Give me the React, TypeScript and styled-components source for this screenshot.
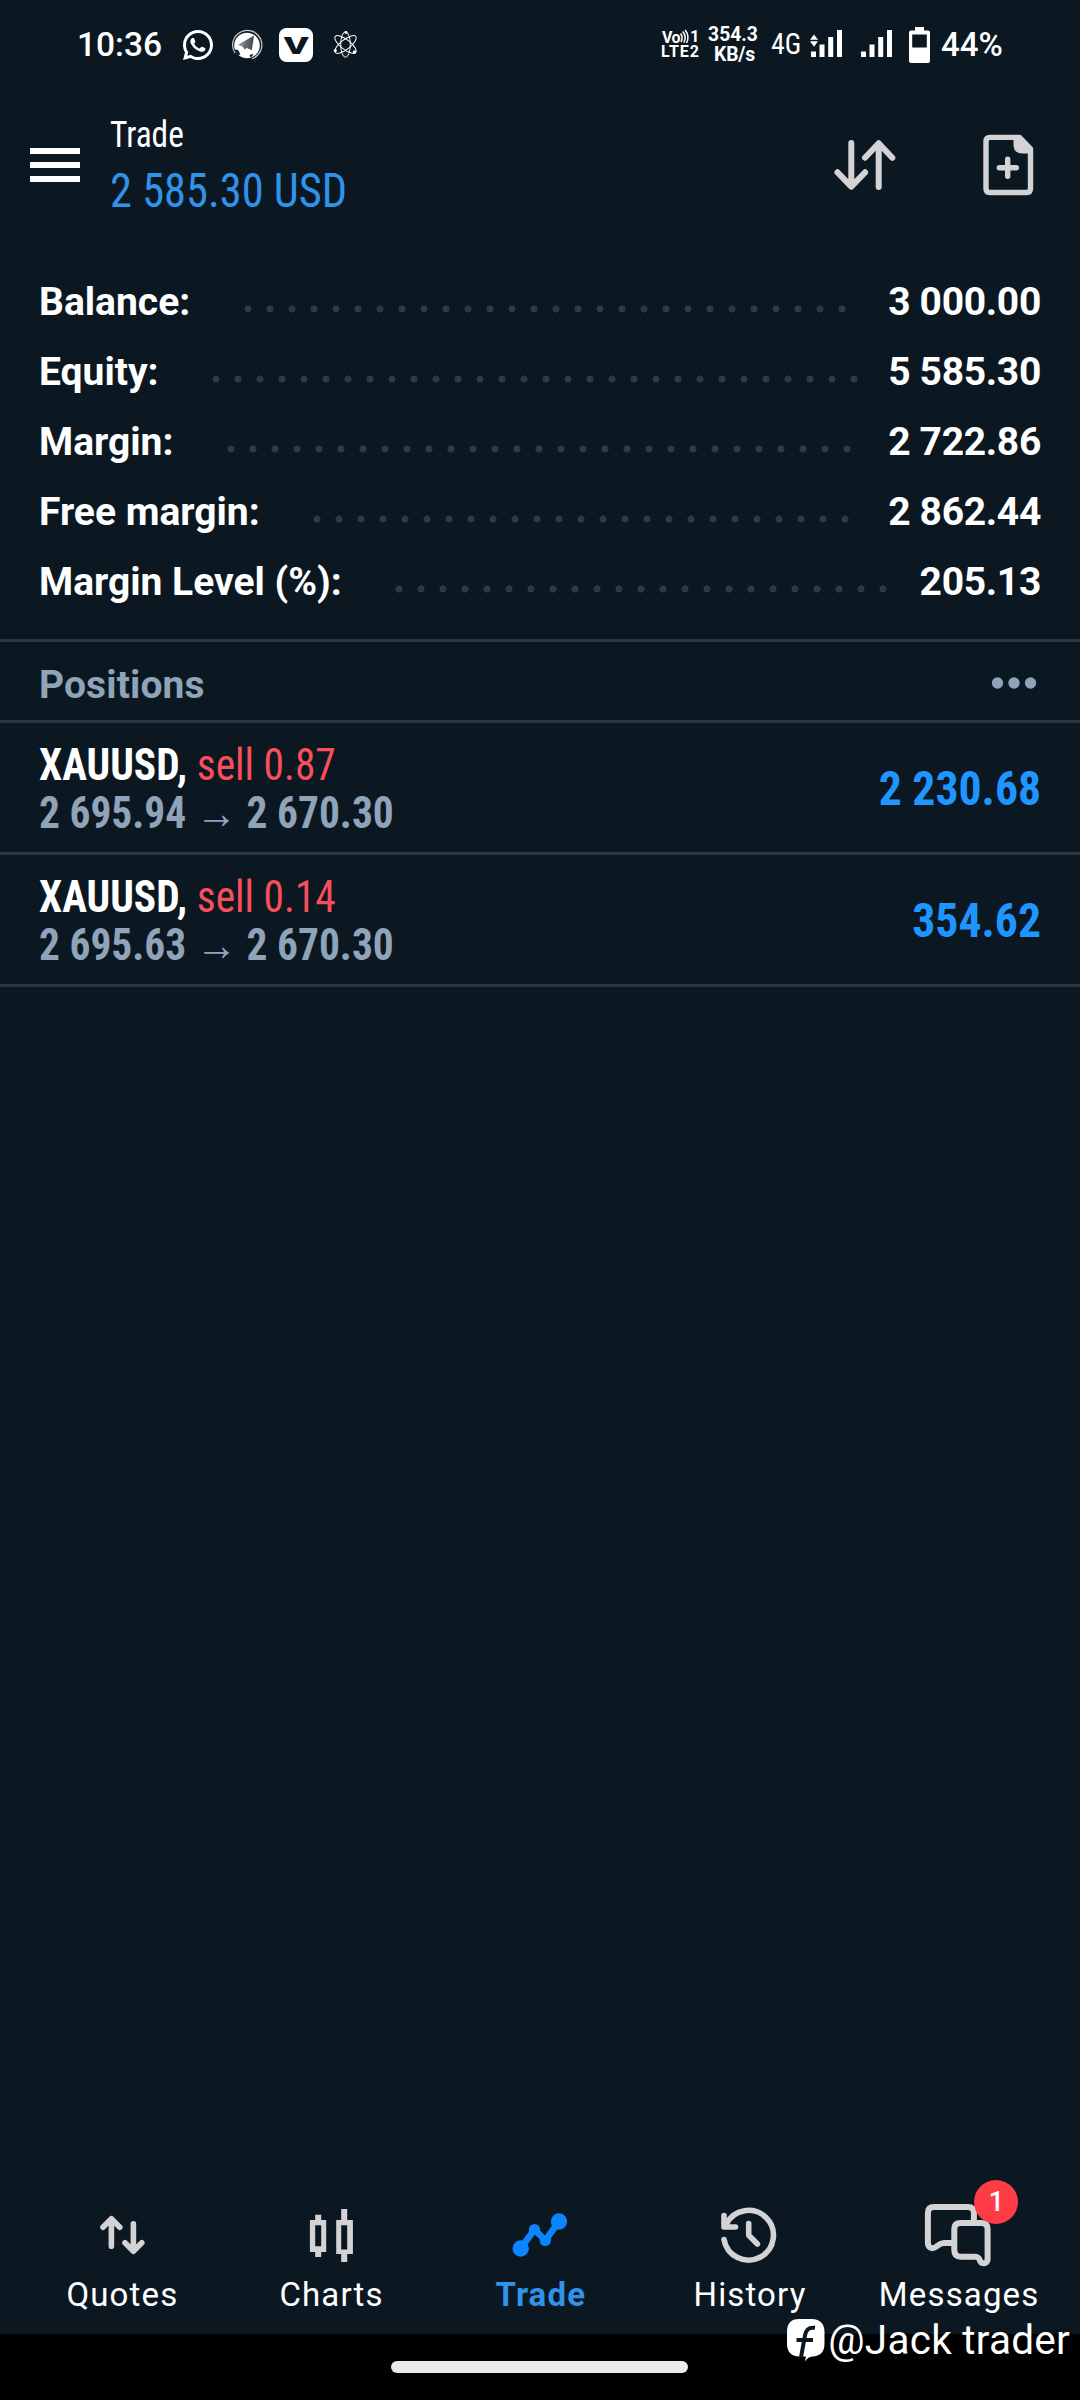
import React from "react";
import styled, { createGlobalStyle } from "styled-components";
import { RiWhatsappLine } from "react-icons/ri";

const color = {
  bg: "#0c1821",
  line: "#293744",
  dot: "#2c3946",
  white: "#ffffff",
  muted: "#8fa3b9",
  icon: "#d3d3d5",
  blue: "#1f95ff",
  blueSoft: "#2f93ea",
  red: "#f74f5b",
  badge: "#ff3b45",
};

const roboto = `Roboto, "Liberation Sans", sans-serif`;
const condensed = `"Roboto Condensed", Roboto, serif`;

const GlobalStyle = createGlobalStyle`
  * { box-sizing: border-box; }
  body { margin: 0; background: #000; }
`;

const Screen = styled.div`
  display: flex;
  flex-direction: column;
  position: relative;
  width: 1080px;
  height: 2400px;
  background: ${color.bg};
  color: ${color.white};
  font-family: ${roboto};
  overflow: hidden;
`;

const Icon = styled.svg`
  display: block;
  flex: none;
  overflow: visible;
`;

/* ---------- status bar ---------- */

const StatusBar = styled.header`
  display: flex;
  justify-content: space-between;
  height: 90px;
  padding: 0 77px;
`;

const StatusGroup = styled.div`
  display: flex;
  align-items: center;
`;

const Slot = styled.div<{ $gap: number }>`
  display: flex;
  flex: none;
  margin-left: ${(p) => p.$gap}px;
`;

const Clock = styled.time`
  width: 103px;
  font-size: 33.5px;
  font-weight: 500;
  line-height: 90px;
`;

const NetSpeed = styled.div`
  display: flex;
  flex-direction: column;
  align-items: center;
  width: 56px;
  margin-left: 5px;
  font-size: 19.3px;
  font-weight: 700;
  line-height: 20px;
`;

const SpeedUnit = styled.span`
  padding-left: 3px;
  letter-spacing: -0.2px;
`;

const NetType = styled.span`
  width: 32px;
  margin: -2px 0 0 10px;
  font-family: ${condensed};
  font-size: 29px;
  line-height: 40px;
  transform: scaleX(0.96);
  transform-origin: left;
`;

const Percent = styled.span`
  width: 62px;
  margin-left: 10px;
  font-size: 33px;
  font-weight: 500;
  line-height: 90px;
  white-space: nowrap;
`;

/* ---------- app header ---------- */

const AppBar = styled.div`
  display: flex;
  align-items: center;
  height: 150px;
  padding: 0 46px 0 30px;
`;

const TitleBlock = styled.div`
  display: flex;
  flex-direction: column;
  gap: 4px;
  margin: 4px auto 0 29px;
  font-family: ${condensed};
  transform: scaleX(0.926);
  transform-origin: left;
`;

const Title = styled.h1`
  margin: 0;
  font-size: 36px;
  font-weight: 400;
  line-height: 44px;
`;

const Profit = styled.div`
  color: ${color.blueSoft};
  font-size: 48px;
  line-height: 60px;
`;

const Actions = styled.div`
  display: flex;
  align-items: center;
  gap: 85px;
`;

/* ---------- account summary ---------- */

const Summary = styled.section`
  padding: 27px 39px 22px;
  border-bottom: 3px solid ${color.line};
`;

const SummaryRow = styled.div`
  display: flex;
  height: 70px;
  font-size: 39px;
  font-weight: 700;
  line-height: 70px;
  white-space: nowrap;
`;

const Leader = styled.span<{ $dots: number }>`
  width: ${(p) => p.$dots * 22}px;
  height: 22px;
  margin: 31px 0 0 46.5px;
  background: radial-gradient(circle at 11px 11px, ${color.dot} 3.1px, transparent 3.9px) 0 0 / 22px 22px repeat-x;
`;

const SummaryValue = styled.span`
  margin-left: auto;
  letter-spacing: -0.3px;
`;

/* ---------- positions ---------- */

const SectionHead = styled.div`
  display: flex;
  align-items: center;
  justify-content: space-between;
  height: 81px;
  padding: 0 43px 0 39px;
  border-bottom: 3px solid ${color.line};
  color: ${color.muted};
`;

const SectionTitle = styled.h2`
  margin: 0;
  padding-top: 7px;
  font-size: 39px;
  font-weight: 700;
  line-height: 70px;
  letter-spacing: 0.1px;
`;

const More = styled.div`
  padding-top: 4px;
`;

const PositionRow = styled.article`
  display: flex;
  align-items: center;
  justify-content: space-between;
  height: 132px;
  padding: 3px 39px 0;
  border-bottom: 3px solid ${color.line};
  font-family: ${condensed};
  white-space: pre;
`;

const PositionInfo = styled.div`
  font-size: 44px;
  line-height: 48px;
  transform: scaleX(0.941);
  transform-origin: left;
`;

const Symbol = styled.div`
  font-weight: 700;
`;

const Side = styled.span`
  color: ${color.red};
  font-weight: 400;
`;

const Prices = styled.div`
  color: ${color.muted};
  font-weight: 700;
`;

const PositionProfit = styled.div`
  color: ${color.blue};
  font-size: 49px;
  font-weight: 700;
  line-height: 60px;
  transform: scaleX(0.933);
  transform-origin: right;
`;

/* ---------- bottom navigation ---------- */

const BottomNav = styled.nav`
  display: flex;
  height: 154px;
  margin-top: auto;
  padding: 0 17px;
`;

const NavItem = styled.div<{ $active?: boolean }>`
  display: flex;
  flex: 1;
  flex-direction: column;
  align-items: center;
  gap: 9px;
  padding-top: 26px;
  color: ${(p) => (p.$active ? color.blueSoft : color.white)};
  font-size: 33px;
  font-weight: ${(p) => (p.$active ? 700 : 400)};
  line-height: 40px;
  letter-spacing: 1.15px;
`;

const NavLabel = styled.span`
  padding-left: 1.5px;
`;

const NavIcon = styled.div`
  position: relative;
  display: flex;
`;

const Badge = styled.span`
  position: absolute;
  left: 52px;
  top: -26px;
  width: 44px;
  height: 44px;
  border-radius: 50%;
  background: ${color.badge};
  color: #fff;
  font-size: 27px;
  font-weight: 500;
  line-height: 45px;
  letter-spacing: 0;
  text-align: center;
`;

const SystemBar = styled.footer`
  display: flex;
  justify-content: center;
  height: 66px;
  padding: 27px 1px 0 0;
  background: #000;
`;

const HomePill = styled.div`
  width: 297px;
  height: 12px;
  border-radius: 6px;
  background: #ebebeb;
`;

const Watermark = styled.div`
  position: absolute;
  right: 10px;
  bottom: 35px;
  display: flex;
  align-items: center;
  gap: 3px;
  font-size: 40.5px;
  line-height: 50px;
  letter-spacing: 0.25px;
  white-space: nowrap;
`;

/* ---------- drawings ---------- */

const TelegramIcon = () => (
  <Icon width="34" height="34" viewBox="0 0 34 34">
    <defs>
      <linearGradient id="plane" x1="0" x2="1">
        <stop offset="0" stopColor="#9aa1a6" />
        <stop offset="1" stopColor="#3b4247" />
      </linearGradient>
    </defs>
    <circle cx="17" cy="17.500" r="12.800" fill="#fff" />
    <path d="M5 25A14.600 14.600 0 1 1 22 30.800" fill="none" stroke="#c9cdd0" strokeWidth="1.200" />
    <path d="M4 21.500l4 .5 2.500 4.500-2.500.5zM19.500 27l4-1.200-2.500 4z" fill={color.bg} />
    <path d="M24 7.500L8 16.800l4.800 2 2 2.700 2-1.500 5 2.300z" fill="url(#plane)" />
    <path d="M23.600 8.500L13.500 18.500l1.300 3 .8-2.300z" fill="#5d666c" />
  </Icon>
);

const VIcon = () => (
  <Icon width="34" height="34" viewBox="0 0 34 34">
    <rect width="34" height="34" rx="7.500" fill="#fff" />
    <text x="4.700" y="26.300" fontFamily={roboto} fontSize="24" fontWeight="900" textLength="25" lengthAdjust="spacingAndGlyphs" fill={color.bg}>
      V
    </text>
  </Icon>
);

const AtomIcon = () => (
  <Icon width="28" height="28" viewBox="0 0 28 28" fill="none" stroke="#fff" strokeWidth="1">
    <ellipse cx="13.500" cy="13.500" rx="4.800" ry="12.800" />
    <ellipse cx="13.500" cy="13.500" rx="4.800" ry="13" transform="rotate(52 13.500 13.500)" />
    <ellipse cx="13.500" cy="13.500" rx="4.800" ry="13" transform="rotate(-52 13.500 13.500)" />
    <g fill="#fff" stroke="none">
      <circle cx="14" cy="1.500" r="1.400" />
      <circle cx="3.300" cy="19.500" r="1.600" />
      <circle cx="22.500" cy="21" r="1.700" />
    </g>
  </Icon>
);

const VolteIcon = () => (
  <Icon width="40" height="34" viewBox="660 28 40 34" fill="#fff" fontFamily={roboto} fontWeight="700">
    <text x="662" y="42.700" fontSize="16" textLength="18.500">Vo</text>
    <text x="690" y="41.800" fontSize="16.500">1</text>
    <text x="661" y="57" fontSize="16" textLength="38">LTE2</text>
    <g fill="none" stroke="#fff" strokeWidth="1.500">
      <path d="M680.500 33.500Q683.500 37 681 42" />
      <path d="M682.700 31.500Q687 36.500 683.700 42.700" />
      <path d="M685.200 30Q690 36.500 686.500 43" />
    </g>
  </Icon>
);

const SignalIcon = ({ data }: { data?: boolean }) => (
  <Icon width="34" height="34" viewBox="0 0 34 34" fill="#fff">
    <path d="M2 23.500h5v5.500h-5zM10.500 16.500h5v12.500h-5zM19.200 9h5v20h-5zM28 2h5v27h-5z" />
    {data && <path d="M5 6.500l4 5.200H1zM1 13.200h8l-4 5.500z" />}
  </Icon>
);

const BatteryIcon = () => (
  <Icon width="22" height="38" viewBox="0 0 22 38">
    <path
      fill="#fff"
      fillRule="evenodd"
      d="M6 1h9v3.500h4a2 2 0 0 1 2 2V35a2 2 0 0 1-2 2H2a2 2 0 0 1-2-2V6.500a2 2 0 0 1 2-2h4zM3.200 8.500v13h14.600v-13z"
    />
  </Icon>
);

const MenuIcon = () => (
  <Icon width="51" height="36" viewBox="0 0 51 36" fill="#fff">
    <path d="M0 1h50v6H0zM0 15h50v6H0zM0 29h50v6H0z" />
  </Icon>
);

const SortIcon = () => (
  <Icon width="64" height="54" viewBox="833 138 64 54" fill="none" stroke={color.icon} strokeWidth="6" strokeLinecap="round" strokeLinejoin="round">
    <path d="M851.300 143v43.500M837.500 172.300l13.800 14.400 13.800-14.400" />
    <path d="M878.700 187v-43.500M865 157.700l13.700-14.400 13.600 14.400" />
  </Icon>
);

const NewOrderIcon = () => (
  <Icon width="52" height="62" viewBox="982 134 52 62" fill="none" stroke={color.icon} strokeWidth="5.400" strokeLinecap="round" strokeLinejoin="round">
    <path d="M990 137.400h29.500l11 11.500v39.600q0 4-4 4H990q-4 0-4-4v-47q0-4.100 4-4.100z" />
    <path d="M1014.500 138v6.500q0 8 8 8h7.500v-3.600l-10.500-11.500z" fill={color.icon} strokeWidth="2" />
    <path d="M1007.700 159.300v17M999.300 167.700h17" />
  </Icon>
);

const MoreIcon = () => (
  <Icon width="46" height="12" viewBox="0 0 46 12" fill={color.muted}>
    <circle cx="6.500" cy="6" r="5.700" />
    <circle cx="23" cy="6" r="5.700" />
    <circle cx="39.500" cy="6" r="5.700" />
  </Icon>
);

const QuotesIcon = () => (
  <Icon width="72" height="60" viewBox="85.600 2206 72 60" fill="none" stroke={color.icon} strokeWidth="5.600" strokeLinecap="round" strokeLinejoin="round">
    <path d="M111 2246.300v-27.300M102.600 2227.300l8.400-8.500 8.400 8.500" />
    <path d="M133 2223.800v27.300M124.600 2242.800l8.400 8.500 8.400-8.500" />
  </Icon>
);

const ChartsIcon = () => (
  <Icon width="72" height="60" viewBox="294.800 2206 72 60" fill={color.icon}>
    <path fillRule="evenodd" d="M315 2214.700h6v5.300h5v32h-5v5h-6v-5h-5.300v-32h5.300zM315 2225.200v21h6v-21z" />
    <path fillRule="evenodd" d="M341 2209h6v11h5.700v34H347v8h-6v-8h-5v-34h5zM341 2225.200v24.200h6v-24.200z" />
  </Icon>
);

const TradeIcon = () => (
  <Icon width="72" height="60" viewBox="504 2206 72 60" fill="#0a84ff" stroke="#0a84ff">
    <path d="M520.500 2248.500L534.500 2229.500L545.300 2240.500L559 2221.500" fill="none" strokeWidth="6.500" />
    <g stroke="none">
      <circle cx="520.700" cy="2248.500" r="8.200" />
      <circle cx="534.500" cy="2229.500" r="5.600" />
      <circle cx="545.300" cy="2240.500" r="5.600" />
      <circle cx="559" cy="2221.500" r="8.200" />
    </g>
  </Icon>
);

const HistoryIcon = () => (
  <Icon width="72" height="60" viewBox="713.200 2206 72 60" fill="none" stroke={color.icon} strokeWidth="5.600" strokeLinecap="round" strokeLinejoin="round">
    <path d="M724.200 2239.500A24.900 24.900 0 1 0 726.500 2224" />
    <path d="M724.200 2215.500v11.500h11.500" />
    <path d="M748.900 2223.500v11.700l8.700 8.800" />
  </Icon>
);

const MessagesIcon = () => (
  <Icon width="72" height="60" viewBox="922.400 2206 72 60" fill="none" stroke={color.icon} strokeWidth="6" strokeLinecap="round" strokeLinejoin="round">
    <path d="M954 2243h-9.500c-6 0-7.500 5.200-11.500 5.200-3 0-4.700-2-4.700-5.200v-30q0-6 6-6h34q6 0 6 6v9" />
    <path d="M961 2223h21q6 0 6 6v30.500c0 4.500-6.500 5-7.700 1-1-3-2-3.800-5.300-3.800h-14q-6.300 0-6.300-6.700v-21q0-6 6.300-6z" />
  </Icon>
);

const BrandIcon = () => (
  <Icon width="38" height="44" viewBox="786 2320 38 44">
    <path fill="#fff" d="M798 2321h13c8 0 12.500 5 12.500 12.500v12.500c0 8-4.500 12.300-12 12.500-3.500.500-5.500 2-7.700 5l1.200-5H798c-8 0-12-5-12-12.500v-12.500c0-8 4-12.500 12-12.500z" />
    <path fill="none" stroke={color.bg} strokeWidth="4" d="M814 2329.800c-6.500-.800-9 2-10 7.500l-4 22M795.500 2342h16.500" />
  </Icon>
);

/* ---------- data ---------- */

const summary = [
  { label: "Balance:", value: "3 000.00", dots: 28 },
  { label: "Equity:", value: "5 585.30", dots: 30 },
  { label: "Margin:", value: "2 722.86", dots: 29 },
  { label: "Free margin:", value: "2 862.44", dots: 25 },
  { label: "Margin Level (%):", value: "205.13", dots: 23 },
];

const positions = [
  { symbol: "XAUUSD,", side: "sell 0.87", prices: "2 695.94 → 2 670.30", profit: "2 230.68" },
  { symbol: "XAUUSD,", side: "sell 0.14", prices: "2 695.63 → 2 670.30", profit: "354.62" },
];

const tabs = [
  { label: "Quotes", icon: <QuotesIcon /> },
  { label: "Charts", icon: <ChartsIcon /> },
  { label: "Trade", icon: <TradeIcon />, active: true },
  { label: "History", icon: <HistoryIcon /> },
  { label: "Messages", icon: <MessagesIcon />, badge: 1 },
];

export default function App() {
  return (
    <Screen>
      <GlobalStyle />
      <StatusBar>
        <StatusGroup>
          <Clock>10:36</Clock>
          <Slot $gap={0}><RiWhatsappLine size={36} /></Slot>
          <Slot $gap={14}><TelegramIcon /></Slot>
          <Slot $gap={15}><VIcon /></Slot>
          <Slot $gap={19}><AtomIcon /></Slot>
        </StatusGroup>
        <StatusGroup>
          <VolteIcon />
          <NetSpeed>
            <span>354.3</span>
            <SpeedUnit>KB/s</SpeedUnit>
          </NetSpeed>
          <NetType>4G</NetType>
          <Slot $gap={6}><SignalIcon data /></Slot>
          <Slot $gap={16}><SignalIcon /></Slot>
          <Slot $gap={16}><BatteryIcon /></Slot>
          <Percent>44%</Percent>
        </StatusGroup>
      </StatusBar>

      <AppBar>
        <MenuIcon />
        <TitleBlock>
          <Title>Trade</Title>
          <Profit>2 585.30 USD</Profit>
        </TitleBlock>
        <Actions>
          <SortIcon />
          <NewOrderIcon />
        </Actions>
      </AppBar>

      <Summary>
        {summary.map((row) => (
          <SummaryRow key={row.label}>
            <span>{row.label}</span>
            <Leader $dots={row.dots} />
            <SummaryValue>{row.value}</SummaryValue>
          </SummaryRow>
        ))}
      </Summary>

      <SectionHead>
        <SectionTitle>Positions</SectionTitle>
        <More><MoreIcon /></More>
      </SectionHead>

      {positions.map((p) => (
        <PositionRow key={p.prices}>
          <PositionInfo>
            <Symbol>
              {p.symbol} <Side>{p.side}</Side>
            </Symbol>
            <Prices>{p.prices}</Prices>
          </PositionInfo>
          <PositionProfit>{p.profit}</PositionProfit>
        </PositionRow>
      ))}

      <BottomNav>
        {tabs.map((tab) => (
          <NavItem key={tab.label} $active={tab.active}>
            <NavIcon>
              {tab.icon}
              {tab.badge && <Badge>{tab.badge}</Badge>}
            </NavIcon>
            <NavLabel>{tab.label}</NavLabel>
          </NavItem>
        ))}
      </BottomNav>

      <SystemBar>
        <HomePill />
      </SystemBar>

      <Watermark>
        <BrandIcon />
        @Jack trader
      </Watermark>
    </Screen>
  );
}
